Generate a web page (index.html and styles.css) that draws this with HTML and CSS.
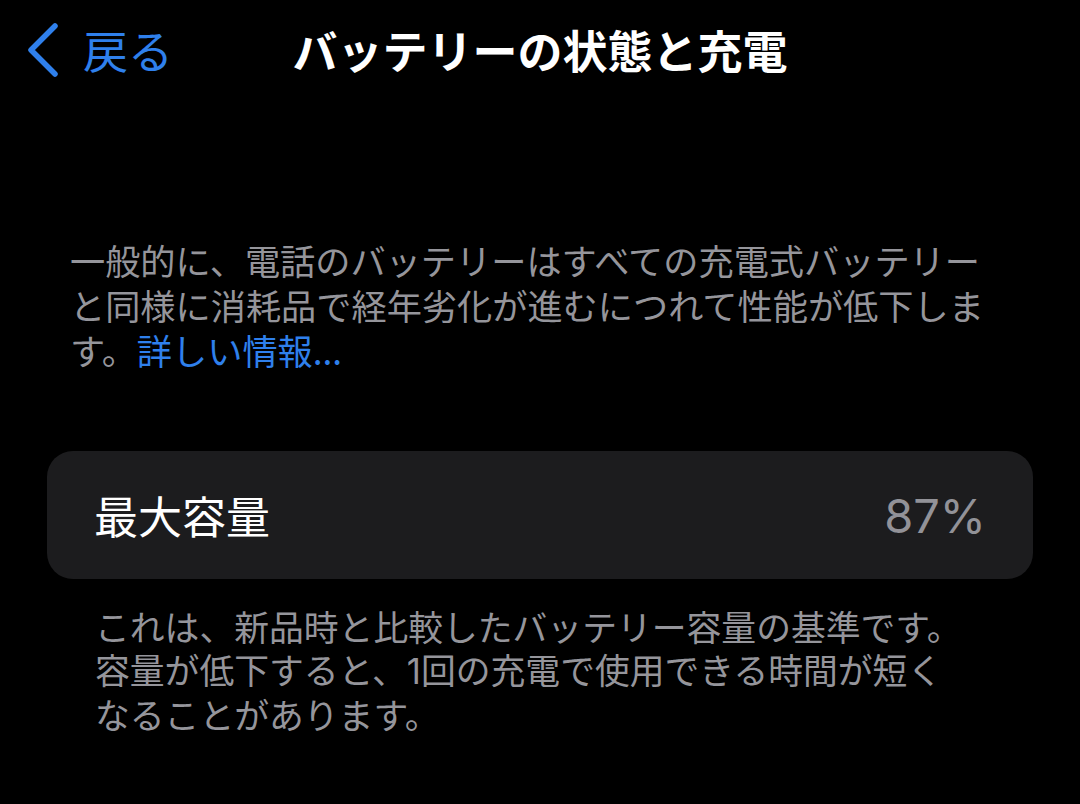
FILE: index.html
```html
<!DOCTYPE html>
<html lang="ja">
<head>
<meta charset="utf-8">
<title>バッテリーの状態と充電</title>
<link rel="stylesheet" href="styles.css">
</head>
<body>
<header class="nav">
  <a class="back" href="#">
    <svg class="chev" width="34" height="56" viewBox="0 0 34 56"><polyline points="29,4 5,28 29,52" fill="none" stroke="currentColor" stroke-width="5.5" stroke-linecap="round" stroke-linejoin="round"/></svg>
    <span class="back-label">戻る</span>
  </a>
  <h1 class="title">バッテリーの状態と充電</h1>
  <span></span>
</header>
<main class="content">
  <p class="intro">一般的に、電話のバッテリーはすべての充電式バッテリー<br>と同様に消耗品で経年劣化が進むにつれて性能が低下しま<br>す。<a class="link" href="#">詳しい情報...</a></p>
  <div class="card">
    <span class="card-label">最大容量</span>
    <span class="card-value">87%</span>
  </div>
  <p class="note">これは、新品時と比較したバッテリー容量の基準です。<br>容量が低下すると、<span class="num">1</span>回の充電で使用できる時間が短く<br>なることがあります。</p>
</main>
</body>
</html>
```

FILE: styles.css
```css
html, body {
  margin: 0;
  padding: 0;
  background: #000;
}
body {
  width: 1080px;
  height: 804px;
  overflow: hidden;
  font-family: "Noto Sans CJK JP", "Noto Sans", sans-serif;
  color: #fff;
}
.nav {
  display: grid;
  grid-template-columns: 1fr auto 1fr;
  align-items: center;
  height: 98px;
}
.back {
  display: flex;
  align-items: center;
  gap: 23px;
  padding-left: 26px;
  color: #2f80ec;
  text-decoration: none;
}
.chev {
  display: block;
  margin-top: 2px;
}
.back-label {
  font-size: 45px;
  line-height: 1;
  font-weight: 400;
}
.title {
  margin: 0;
  font-size: 45px;
  line-height: 1;
  font-weight: 700;
  color: #fff;
}
.content {
  display: flex;
  flex-direction: column;
}
.intro {
  margin: 139px 0 0;
  padding-left: 70px;
  font-size: 35.2px;
  line-height: 45px;
  color: #95959b;
}
.link {
  color: #2f80ec;
  text-decoration: none;
}
.card {
  margin: 79px 47px 0;
  height: 128px;
  box-sizing: border-box;
  padding: 0 47px;
  border-radius: 26px;
  background: #1c1c1e;
  display: flex;
  align-items: center;
  justify-content: space-between;
}
.card-label {
  font-size: 44px;
  color: #fff;
}
.card-value {
  font-family: Inter, "Noto Sans", sans-serif;
  font-size: 47px;
  font-weight: 400;
  color: #929298;
}
.note {
  margin: 26px 0 0;
  padding-left: 95px;
  font-size: 34.8px;
  line-height: 43px;
  color: #95959b;
}
.num {
  font-family: Inter, "Noto Sans", sans-serif;
}
```
